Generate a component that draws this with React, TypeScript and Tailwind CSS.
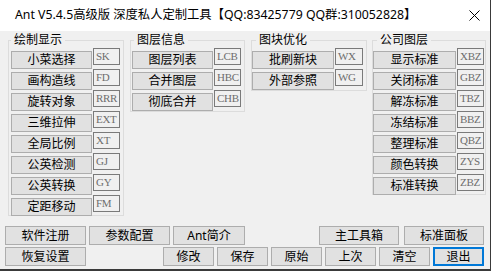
import type { ReactNode } from "react";

type Row = { label: string; code: string };

const ui = "font-['Noto_Sans','Noto_Sans_CJK_SC',sans-serif]";

function Btn({ children, className }: { children: ReactNode; className: string }) {
  return (
    <button
      className={`flex items-center justify-center bg-[#e1e1e1] border border-[#adadad] text-[12px] leading-none text-black ${className}`}
    >
      {children}
    </button>
  );
}

function Group({
  title,
  rows,
  box,
  legend,
  btnW,
  codeW,
}: {
  title: string;
  rows: Row[];
  box: string;
  legend: string;
  btnW: string;
  codeW: string;
}) {
  return (
    <fieldset className={`border border-[#dcdcdc] ${box}`}>
      <legend className={`px-[3px] h-[16px] text-[12px] leading-[16px] text-black ${legend}`}>{title}</legend>
      {rows.map((r) => (
        <div key={r.label} className="flex items-start h-[21px]">
          <Btn className={`mt-[3px] h-[18px] ${btnW}`}>{r.label}</Btn>
          <div
            className={`ml-[1px] h-[17px] border border-[#7a7a7a] bg-[#f0f0f0] pl-[2px] pt-[1px] text-[11px] leading-[12px] tracking-[-0.3px] text-[#6d6d6d] font-['Liberation_Serif',serif] ${codeW}`}
          >
            {r.code}
          </div>
        </div>
      ))}
    </fieldset>
  );
}

const draw: Row[] = [
  { label: "小菜选择", code: "SK" },
  { label: "画构造线", code: "FD" },
  { label: "旋转对象", code: "RRR" },
  { label: "三维拉伸", code: "EXT" },
  { label: "全局比例", code: "XT" },
  { label: "公英检测", code: "GJ" },
  { label: "公英转换", code: "GY" },
  { label: "定距移动", code: "FM" },
];

const layers: Row[] = [
  { label: "图层列表", code: "LCB" },
  { label: "合并图层", code: "HBC" },
  { label: "彻底合并", code: "CHB" },
];

const blocks: Row[] = [
  { label: "批刷新块", code: "WX" },
  { label: "外部参照", code: "WG" },
];

const company: Row[] = [
  { label: "显示标准", code: "XBZ" },
  { label: "关闭标准", code: "GBZ" },
  { label: "解冻标准", code: "TBZ" },
  { label: "冻结标准", code: "BBZ" },
  { label: "整理标准", code: "QBZ" },
  { label: "颜色转换", code: "ZYS" },
  { label: "标准转换", code: "ZBZ" },
];

export default function App() {
  return (
    <div className={`w-[491px] h-[271px] flex flex-col overflow-hidden bg-[#f0f0f0] border-r border-b-2 border-[#3a3a3a] ${ui}`}>
      {/* title bar */}
      <div className="h-[31px] shrink-0 bg-white flex items-center pl-[15px] pr-[10px]">
        <span className="text-[12.3px] text-black whitespace-nowrap">
          Ant V5.4.5高级版 深度私人定制工具【QQ:83425779 QQ群:310052828】
        </span>
        <svg className="ml-auto" width="11" height="11" viewBox="0 0 11 11">
          <path d="M0.5 0.5 L10.5 10.5 M10.5 0.5 L0.5 10.5" stroke="#000" strokeWidth="1" />
        </svg>
      </div>

      <div className="flex-1 pt-[1px]">
        <div className="flex items-start pl-[8px] h-[184px]">
          <Group title="绘制显示" rows={draw} box="w-[116px] h-[184px] pl-[2px]" legend="" btnW="w-[81px]" codeW="w-[27px]" />
          <Group title="图层信息" rows={layers} box="ml-[6px] w-[115px] h-[80px] pl-[1px]" legend="ml-[2px]" btnW="w-[81px]" codeW="w-[27px]" />
          <Group title="图块优化" rows={blocks} box="ml-[6px] w-[116px] h-[59px]" legend="ml-[4px]" btnW="w-[82px]" codeW="w-[28px]" />
          <Group title="公司图层" rows={company} box="ml-[5px] w-[114px] h-[163px]" legend="ml-[4px]" btnW="w-[83px]" codeW="w-[27px]" />
        </div>

        <div className="mt-[10px] pl-[5px] pr-[6px] flex flex-col gap-[2px]">
          <div className="flex items-center">
            <Btn className="w-[81px] h-[19px]">软件注册</Btn>
            <Btn className="ml-[3px] w-[81px] h-[19px]">参数配置</Btn>
            <Btn className="ml-[3px] w-[72px] h-[19px]">Ant简介</Btn>
            <Btn className="ml-auto w-[80px] h-[19px]">主工具箱</Btn>
            <Btn className="ml-[5px] w-[80px] h-[19px]">标准面板</Btn>
          </div>
          <div className="flex items-center">
            <Btn className="w-[81px] h-[19px]">恢复设置</Btn>
            <Btn className="ml-auto w-[51px] h-[19px]">修改</Btn>
            <Btn className="ml-[3px] w-[51px] h-[19px]">保存</Btn>
            <Btn className="ml-[3px] w-[51px] h-[19px]">原始</Btn>
            <Btn className="ml-[3px] w-[51px] h-[19px]">上次</Btn>
            <Btn className="ml-[3px] w-[51px] h-[19px]">清空</Btn>
            <button className="ml-[3px] w-[51px] h-[19px] flex items-center justify-center bg-[#e1e1e1] border-2 border-[#0078d7] text-[12px] leading-none text-black">
              退出
            </button>
          </div>
        </div>
      </div>
    </div>
  );
}
